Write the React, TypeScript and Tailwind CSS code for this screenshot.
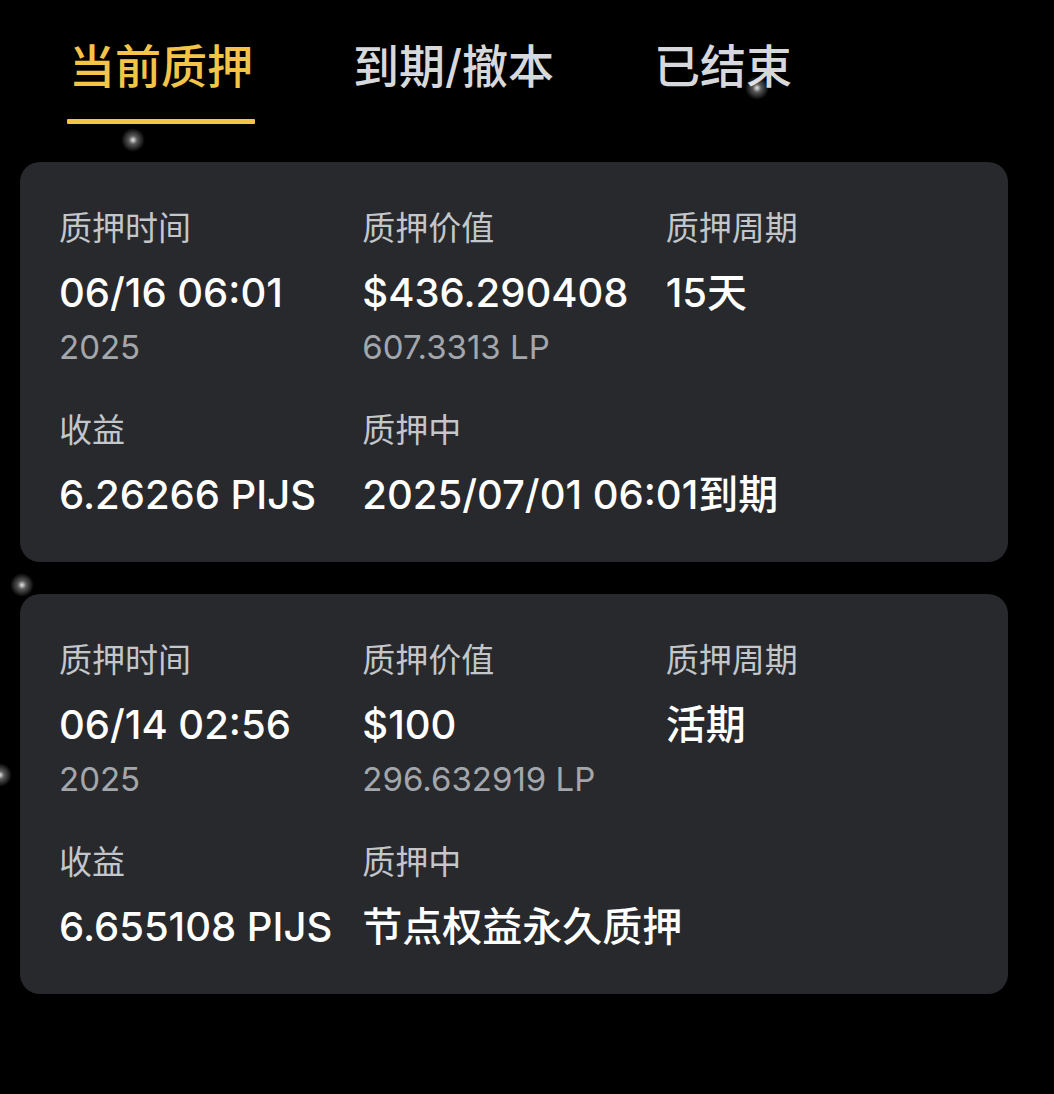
const tabs = ["当前质押", "到期/撤本", "已结束"];

type Stake = {
  time: string;
  year: string;
  value: string;
  lp: string;
  period: string;
  reward: string;
  status: string;
};

const stakes: Stake[] = [
  {
    time: "06/16 06:01",
    year: "2025",
    value: "$436.290408",
    lp: "607.3313 LP",
    period: "15天",
    reward: "6.26266 PIJS",
    status: "2025/07/01 06:01到期",
  },
  {
    time: "06/14 02:56",
    year: "2025",
    value: "$100",
    lp: "296.632919 LP",
    period: "活期",
    reward: "6.655108 PIJS",
    status: "节点权益永久质押",
  },
];

const font = "font-['Inter','Noto_Sans_CJK_SC',sans-serif]";

function Label({ children }: { children: React.ReactNode }) {
  return <p className="text-[33px] leading-[40px] text-[#c3c6ca]">{children}</p>;
}

function Value({ children }: { children: React.ReactNode }) {
  return (
    <p className="mt-[21px] whitespace-nowrap text-[40px] font-medium leading-[48px] text-white">
      {children}
    </p>
  );
}

function Sub({ children }: { children: React.ReactNode }) {
  return <p className="mt-[10px] text-[33px] leading-[40px] text-[#a3a7ac]">{children}</p>;
}

function StakeCard({ stake }: { stake: Stake }) {
  return (
    <div className="w-[988px] rounded-[20px] bg-[#27292c] pl-[39px] pr-[39px] pb-[43px] pt-[46px]">
      <div className="grid grid-cols-3">
        <div>
          <Label>质押时间</Label>
          <Value>{stake.time}</Value>
          <Sub>{stake.year}</Sub>
        </div>
        <div>
          <Label>质押价值</Label>
          <Value>{stake.value}</Value>
          <Sub>{stake.lp}</Sub>
        </div>
        <div>
          <Label>质押周期</Label>
          <Value>{stake.period}</Value>
        </div>
      </div>
      <div className="mt-[43px] grid grid-cols-3">
        <div>
          <Label>收益</Label>
          <Value>{stake.reward}</Value>
        </div>
        <div className="col-span-2">
          <Label>质押中</Label>
          <Value>{stake.status}</Value>
        </div>
      </div>
    </div>
  );
}

function Sparkle({ className }: { className: string }) {
  return (
    <div
      className={`pointer-events-none absolute h-[24px] w-[24px] rounded-full bg-[radial-gradient(circle,rgba(255,255,255,0.9)_0%,rgba(255,255,255,0.35)_25%,rgba(255,255,255,0)_70%)] ${className}`}
    />
  );
}

export default function App() {
  return (
    <div className={`relative h-[1094px] w-full overflow-hidden bg-black ${font}`}>
      <div className="flex gap-[100px] pl-[69px] pt-[38px]">
        {tabs.map((tab, i) => (
          <div key={tab} className="flex flex-col">
            <span
              className={`text-[46px] font-medium leading-[56px] ${
                i === 0 ? "text-[#f3c447]" : "text-[#d6d8dc]"
              }`}
            >
              {tab}
            </span>
            {i === 0 && <div className="-mx-[2px] mt-[25px] h-[5px] rounded-[1px] bg-[#f3c447]" />}
          </div>
        ))}
      </div>

      <div className="ml-[20px] mt-[38px] flex flex-col gap-[32px]">
        {stakes.map((s) => (
          <StakeCard key={s.time} stake={s} />
        ))}
      </div>

      <Sparkle className="left-[121px] top-[128px]" />
      <Sparkle className="left-[745px] top-[76px]" />
      <Sparkle className="left-[10px] top-[573px]" />
      <Sparkle className="-left-[12px] top-[763px]" />
    </div>
  );
}
